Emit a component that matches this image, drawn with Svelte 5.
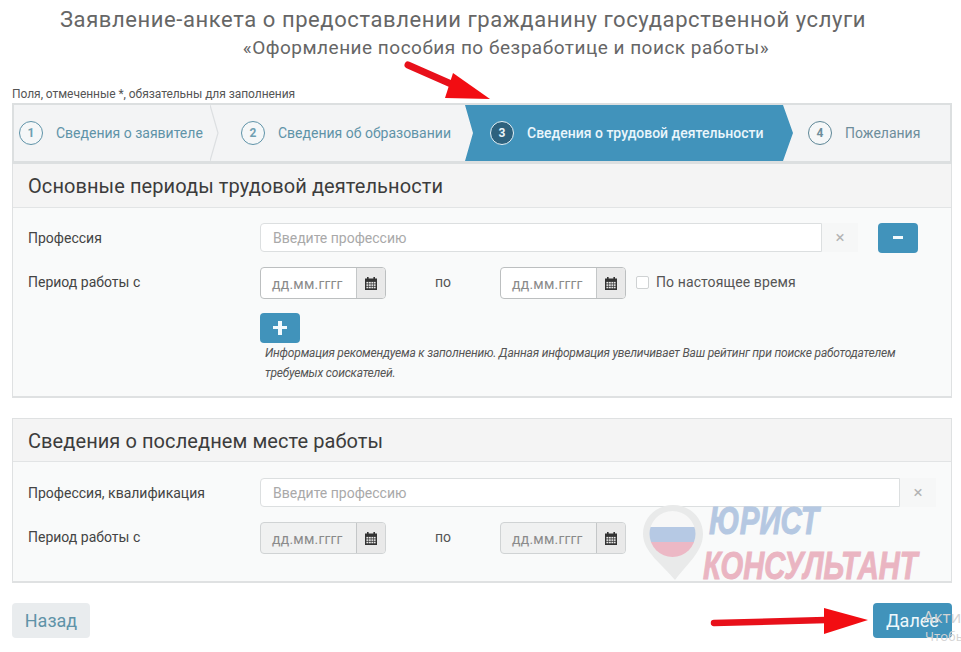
<script>
  const steps = [
    { n: 1, label: 'Сведения о заявителе', cls: 's1' },
    { n: 2, label: 'Сведения об образовании', cls: 's2' },
    { n: 3, label: 'Сведения о трудовой деятельности', cls: 's3 active' },
    { n: 4, label: 'Пожелания', cls: 's4' }
  ];
</script>

{#snippet cal()}
  <svg class="cal" viewBox="0 0 14 14" width="14" height="15" aria-hidden="true">
    <rect x="1" y="2" width="12" height="11.5" fill="#333" />
    <rect x="3" y="0.5" width="1.6" height="3" fill="#333" />
    <rect x="9.4" y="0.5" width="1.6" height="3" fill="#333" />
    <g fill="#e8e8e8">
      <rect x="2.4" y="5.4" width="2" height="1.6" /><rect x="5" y="5.4" width="1.8" height="1.6" /><rect x="7.4" y="5.4" width="1.8" height="1.6" /><rect x="9.8" y="5.4" width="1.8" height="1.6" />
      <rect x="2.4" y="7.8" width="2" height="1.6" /><rect x="5" y="7.8" width="1.8" height="1.6" /><rect x="7.4" y="7.8" width="1.8" height="1.6" /><rect x="9.8" y="7.8" width="1.8" height="1.6" />
      <rect x="2.4" y="10.2" width="2" height="1.6" /><rect x="5" y="10.2" width="1.8" height="1.6" /><rect x="7.4" y="10.2" width="1.8" height="1.6" /><rect x="9.8" y="10.2" width="1.8" height="1.6" />
    </g>
  </svg>
{/snippet}

{#snippet date(off)}
  <div class="date" class:off>
    <span class="date-text">дд.мм.гггг</span>
    <span class="date-btn">{@render cal()}</span>
  </div>
{/snippet}

<div class="page">
  <h1>Заявление-анкета о предоставлении гражданину государственной услуги</h1>
  <h2>«Оформление пособия по безработице и поиск работы»</h2>
  <p class="req">Поля, отмеченные *, обязательны для заполнения</p>

  <div class="stepper">
    {#each steps as s}
      <div class="step {s.cls}">
        <span class="num">{s.n}</span>
        <span class="lbl">{s.label}</span>
        {#if s.n === 1}
          <svg class="chev" viewBox="0 0 10 56" width="10" height="56" aria-hidden="true"><path d="M0 0 L8 28 L0 56" fill="none" stroke="#dcdfe1" stroke-width="1.2" /></svg>
        {/if}
      </div>
    {/each}
  </div>

  <section class="panel first">
    <header>Основные периоды трудовой деятельности</header>
    <div class="body b1">
      <div class="row r-prof">
        <span class="label">Профессия</span>
        <div class="input w562">Введите профессию</div>
        <span class="clear">×</span>
        <button class="sq minus" aria-label="Удалить"><i></i></button>
      </div>
      <div class="row r-date">
        <span class="label">Период работы с</span>
        {@render date(false)}
        <span class="po">по</span>
        {@render date(false)}
        <span class="check"></span>
        <span class="now">По настоящее время</span>
      </div>
      <button class="sq plus" aria-label="Добавить"><i></i><b></b></button>
      <p class="hint">Информация рекомендуема к заполнению. Данная информация увеличивает Ваш рейтинг при поиске работодателем<br />требуемых соискателей.</p>
    </div>
  </section>

  <section class="panel second">
    <header>Сведения о последнем месте работы</header>
    <div class="body b2">
      <div class="row r-prof">
        <span class="label">Профессия, квалификация</span>
        <div class="input w640">Введите профессию</div>
        <span class="clear">×</span>
      </div>
      <div class="row r-date">
        <span class="label">Период работы с</span>
        {@render date(true)}
        <span class="po">по</span>
        {@render date(true)}
      </div>
    </div>
  </section>

  <div class="actions">
    <button class="back">Назад</button>
    <button class="next">Далее</button>
  </div>

  <div class="wm" aria-hidden="true">
    <svg class="pin" viewBox="0 0 62 76" width="62" height="76">
      <defs><clipPath id="flag"><circle cx="29.5" cy="29" r="23" /></clipPath></defs>
      <path d="M30 0 C13 0 0 13 0 29 C0 47 20 60 32 75 C43 60 60 47 60 29 C60 13 47 0 30 0 Z" fill="#e9eaea" />
      <g clip-path="url(#flag)">
        <rect x="0" y="0" width="62" height="22" fill="#f7f7f7" />
        <rect x="0" y="22" width="62" height="15" fill="#b6c9e4" />
        <rect x="0" y="37" width="62" height="20" fill="#ecb8c5" />
      </g>
    </svg>
    <span class="w1">ЮРИСТ</span>
    <span class="w2">КОНСУЛЬТАНТ</span>
  </div>

  <span class="activate a1">Акти</span>
  <span class="activate a2">Чтобы</span>

  <svg class="arrows" viewBox="0 0 961 652" width="961" height="652" aria-hidden="true">
    <path d="M408 65 L458 87" stroke="#e8101a" stroke-width="7" stroke-linecap="round" />
    <path d="M453 73 L490 99 L445 98 Z" fill="#f20d12" />
    <path d="M714 623 L826 620" stroke="#e8101a" stroke-width="6.5" stroke-linecap="round" />
    <path d="M824 608 L868 620 L824 634 Z" fill="#f20d12" />
  </svg>
</div>

<style>
  :global(body) { margin: 0; background: #fff; }
  .page {
    position: relative;
    width: 961px;
    height: 652px;
    overflow: hidden;
    font-family: Roboto, "Liberation Sans", sans-serif;
    color: #444;
    box-sizing: border-box;
    padding: 6px 9px 0 12px;
  }
  h1 {
    margin: 0;
    font-weight: 400;
    font-size: 22px;
    line-height: 28px;
    color: #666;
    text-align: center;
    letter-spacing: 0.58px;
    padding-right: 38px;
    white-space: nowrap;
  }
  h2 {
    margin: 1px 0 0;
    font-weight: 400;
    font-size: 19px;
    line-height: 26px;
    color: #666;
    text-align: center;
    letter-spacing: 0.5px;
    padding-left: 48px;
    white-space: nowrap;
  }
  .req {
    margin: 26px 0 0;
    font-size: 12px;
    line-height: 14px;
    color: #555;
    letter-spacing: -0.05px;
    height: 16px;
  }
  .stepper {
    display: flex;
    height: 56px;
    background: #f3f4f5;
    border: 2px solid #dcdfe0;
    border-bottom-width: 3px;
  }
  .step {
    position: relative;
    display: flex;
    align-items: center;
    box-sizing: border-box;
    font-size: 14px;
    color: #5f93a8;
  }
  .s1 { width: 198px; padding-left: 5px; }
  .s2 { width: 253px; padding-left: 29px; }
  .s3 { width: 328px; padding-left: 25px; }
  .s4 { flex: 1; padding-left: 15px; color: #6d8d9b; }
  .active {
    background: #4193bb;
    color: #eaf6fb;
    font-weight: 500;
    clip-path: polygon(0 0, 318px 0, 328px 50%, 318px 100%, 0 100%, 8px 50%);
  }
  .num {
    box-sizing: border-box;
    width: 24px;
    height: 24px;
    border: 1px solid #5f93a8;
    border-radius: 50%;
    display: flex;
    align-items: center;
    justify-content: center;
    font-size: 12px;
    font-weight: 700;
    color: #6f9fb2;
    margin-right: 13px;
    background: #f5f7f8;
    flex: none;
  }
  .active .num { background: #2d627e; border-color: #e4f2f8; color: #eaf6fb; }
  .s4 .num { border-color: #5d8696; color: #6d8d9b; }
  .chev { position: absolute; right: -8px; top: 0; }

  .panel {
    box-sizing: border-box;
    border: 1px solid #dfe1e2;
    border-top: 0;
    background: #f9fafa;
    border-bottom-width: 2px;
  }
  .first { height: 234px; }
  .second { height: 165px; margin-top: 20px; border-top: 1px solid #dfe1e2; }
  header {
    box-sizing: border-box;
    background: #f4f4f4;
    border-bottom: 1px solid #e2e4e5;
    font-size: 20px;
    color: #3c3c3c;
    padding-left: 15px;
    letter-spacing: 0.08px;
    height: 44px;
    line-height: 44px;
  }
  .second header { height: 43px; line-height: 44px; }
  .body { padding: 15px 0 0 247px; position: relative; }
  .b2 { padding-top: 16px; }
  .row { display: flex; align-items: flex-start; position: relative; }
  .r-prof { height: 44px; }
  .r-date { height: 46px; }
  .label {
    position: absolute;
    left: -232px;
    top: 5px;
    font-size: 14px;
    line-height: 20px;
    color: #444;
  }
  .input {
    box-sizing: border-box;
    height: 29px;
    background: #fff;
    border: 1px solid #dcdfe0;
    border-radius: 4px 0 0 4px;
    padding-left: 12px;
    font-size: 14px;
    line-height: 28px;
    color: #a9a9a9;
  }
  .w562 { width: 562px; }
  .w640 { width: 640px; }
  .clear {
    width: 36px;
    height: 29px;
    background: #f6f7f7;
    color: #b3b3b3;
    font-size: 17px;
    line-height: 29px;
    text-align: center;
  }
  .sq {
    position: relative;
    box-sizing: border-box;
    width: 40px;
    height: 30px;
    background: #4193bb;
    border: 0;
    border-radius: 4px;
    padding: 0;
    display: block;
  }
  .minus { margin-left: 20px; }
  .sq i {
    position: absolute;
    left: 15px;
    top: 13px;
    width: 10px;
    height: 3px;
    background: #f2fafd;
  }
  .plus i { left: 13px; width: 14px; top: 13px; }
  .plus b {
    position: absolute;
    left: 18px;
    top: 8px;
    width: 4px;
    height: 14px;
    background: #f2fafd;
  }
  .date {
    box-sizing: border-box;
    width: 126px;
    height: 32px;
    display: flex;
    border: 1px solid #bcbfc0;
    border-radius: 4px;
    overflow: hidden;
    background: #fff;
  }
  .date.off { background: #f0f1f1; border-color: #d0d3d4; }
  .date-text {
    flex: 1;
    font-size: 14px;
    line-height: 33px;
    padding-left: 11px;
    color: #8a8a8a;
    letter-spacing: 0.2px;
  }
  .date-btn {
    width: 28px;
    background: #e9e9e9;
    border-left: 1px solid #c4c7c8;
    display: flex;
    align-items: center;
    justify-content: center;
  }
  .po {
    width: 114px;
    text-align: center;
    font-size: 14px;
    line-height: 20px;
    padding-top: 5px;
    color: #555;
  }
  .check {
    box-sizing: border-box;
    width: 13px;
    height: 13px;
    margin: 9px 7px 0 10px;
    background: #fff;
    border: 1px solid #cfd2d3;
    border-radius: 2px;
  }
  .now { font-size: 14px; line-height: 20px; padding-top: 5px; color: #555; letter-spacing: 0.1px; }
  .hint {
    margin: 0 0 0 5px;
    font-style: italic;
    font-size: 12px;
    letter-spacing: -0.2px;
    line-height: 20px;
    color: #555;
    white-space: nowrap;
  }
  .actions {
    display: flex;
    justify-content: space-between;
    margin-top: 20px;
  }
  .actions button {
    box-sizing: border-box;
    height: 35px;
    border: 0;
    border-radius: 4px;
    font-family: inherit;
    font-size: 18px;
  }
  .back { width: 78px; background: #e9ecee; color: #5f93a8; }
  .next { width: 79px; background: #4193bb; color: #eef8fc; }

  .wm { position: absolute; left: 641px; top: 502px; width: 290px; height: 90px; pointer-events: none; }
  .pin { position: absolute; left: 2px; top: 3px; }
  .w1, .w2 {
    position: absolute;
    font-family: "Liberation Sans", sans-serif;
    font-weight: 700;
    font-style: italic;
    white-space: nowrap;
    transform-origin: left top;
    -webkit-text-stroke: 1px currentColor;
  }
  .w1 { left: 68px; top: -1px; font-size: 38px; line-height: 40px; color: #b5c8e2; transform: scaleX(0.776); }
  .w2 { left: 62px; top: 44px; font-size: 38px; line-height: 40px; color: #eab5c2; transform: scaleX(0.766); }
  .activate { position: absolute; color: #d4d4d4; font-size: 17px; font-family: "Open Sans", sans-serif; white-space: nowrap; }
  .a1 { left: 923px; top: 605px; }
  .a2 { left: 925px; top: 627px; font-size: 13px; }
  .arrows { position: absolute; left: 0; top: 0; pointer-events: none; }
</style>
